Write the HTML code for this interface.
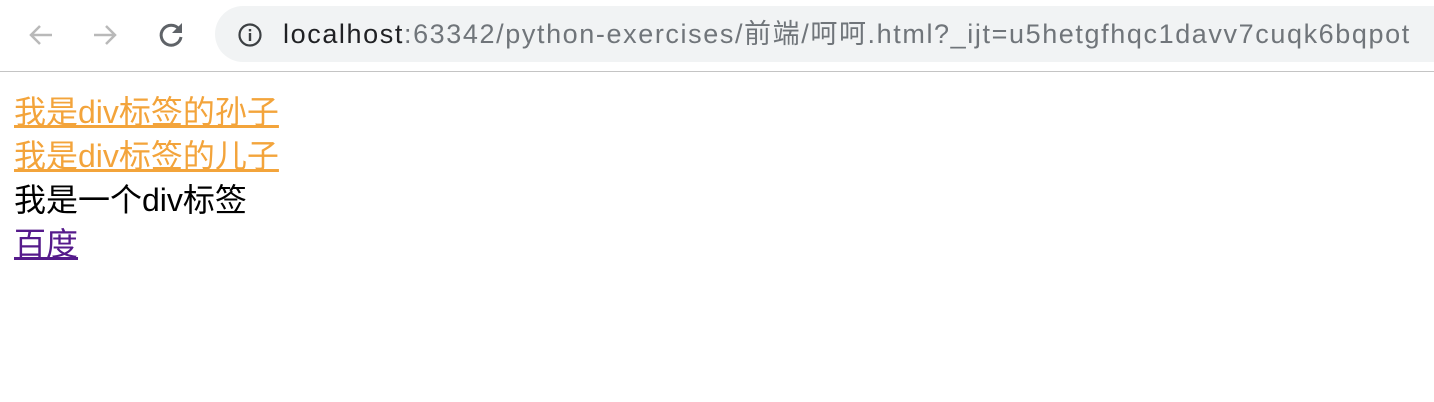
<!DOCTYPE html>
<html><head><meta charset="utf-8"><style>
body{margin:0;width:1434px;height:402px;overflow:hidden;background:#fff;font-family:"Liberation Sans","Noto Sans CJK SC",sans-serif;}
.bar{position:absolute;left:0;top:0;width:1434px;height:71px;background:#fff;border-bottom:1px solid #c4c4c4;}
.pill{position:absolute;left:215px;top:6px;width:1260px;height:56px;border-radius:28px;background:#f1f3f4;}
.url{position:absolute;left:283px;top:17px;font-size:27px;letter-spacing:1.6px;color:#202124;white-space:nowrap;line-height:34px;}
.url span{color:#70757a}
.content{position:absolute;left:14px;top:90px;font-size:32px;line-height:44px;}
.content div{height:44px;white-space:nowrap}
a.o{color:#f3a43b;text-decoration:underline}
a.p{color:#551a8b;text-decoration:underline}
</style></head><body>
<div class="bar">
<svg style="position:absolute;left:26px;top:20px" width="30" height="30" viewBox="0 0 30 30"><path d="M26 15H5M14 6l-9 9 9 9" fill="none" stroke="#b9b9b9" stroke-width="2.5"/></svg>
<svg style="position:absolute;left:90px;top:20px" width="30" height="30" viewBox="0 0 30 30"><path d="M4 15h21M16 6l9 9-9 9" fill="none" stroke="#b9b9b9" stroke-width="2.5"/></svg>
<svg style="position:absolute;left:155px;top:19px" width="32" height="32" viewBox="0 0 32 32"><path d="M24 10A10 10 0 1 0 26 18" fill="none" stroke="#5f6368" stroke-width="3"/><path d="M27 4v10H17z" fill="#5f6368"/></svg>
<div class="pill"></div>
<svg style="position:absolute;left:237px;top:22px" width="26" height="26" viewBox="0 0 26 26"><circle cx="13" cy="13" r="10.5" fill="none" stroke="#3c4043" stroke-width="2.2"/><rect x="11.8" y="11" width="2.4" height="8" fill="#3c4043"/><rect x="11.8" y="7" width="2.4" height="2.4" fill="#3c4043"/></svg>
<div class="url">localhost<span>:63342/python-exercises/前端/呵呵.html?_ijt=u5hetgfhqc1davv7cuqk6bqpot</span></div>
</div>
<div class="content">
<div><a class="o">我是div标签的孙子</a></div>
<div><a class="o">我是div标签的儿子</a></div>
<div>我是一个div标签</div>
<div><a class="p">百度</a></div>
</div>
</body></html>
